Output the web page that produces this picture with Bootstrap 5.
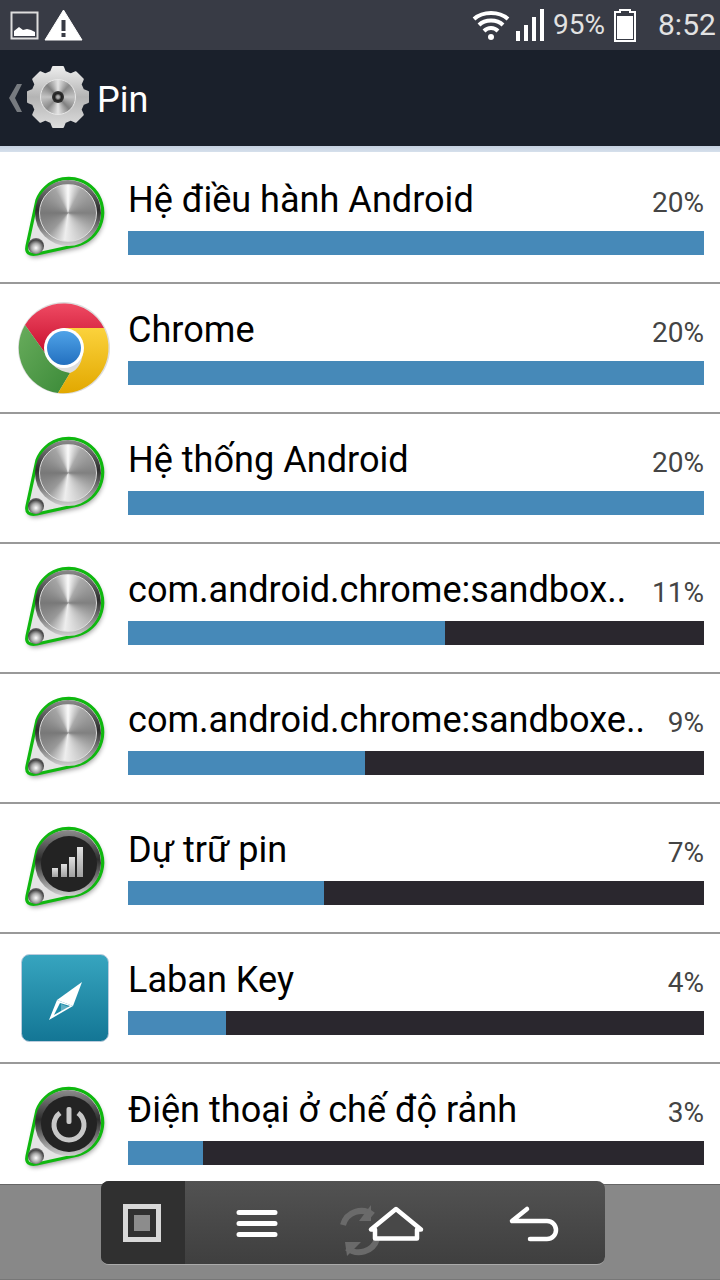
<!DOCTYPE html>
<html lang="vi">
<head>
<meta charset="utf-8">
<title>Pin</title>
<link rel="stylesheet" href="https://cdn.jsdelivr.net/npm/bootstrap@5.3.0/dist/css/bootstrap.min.css">
<style>
html,body{margin:0;height:1280px;overflow:hidden}
body{font-family:Roboto,"Noto Sans",sans-serif;background:#fff}
.phone{width:720px;height:1280px}
.sb{height:50px;background:#383b45;color:#e2e2e2;font-size:28px;line-height:50px}
.sb-time{width:62px;text-align:left;margin-left:21px;font-size:30px}
.abar{height:96px;background:#1a202b;color:#fff;font-size:36px}
.abar-gear{position:relative;width:64px;height:64px;margin:0 0 2px 2px}
.abar-title{padding-top:4px;margin-left:7px}
.gear-disc{position:absolute;left:14px;top:14px;width:36px;height:36px;border-radius:50%;border:1px solid #e8e8e8;background:conic-gradient(#e4e4e4,#8a8a8a 12%,#c4c4c4 25%,#808080 38%,#e4e4e4 50%,#8a8a8a 62%,#c4c4c4 75%,#808080 88%,#e4e4e4)}
.gear-eye{position:absolute;left:26px;top:26px;width:12px;height:12px;border-radius:50%;background:radial-gradient(#aaa 0 15%,#222 40%,#333 70%,#888 100%)}
.hline{height:6px;background:linear-gradient(#c4d0e0,#d6e0ec)}
.plist{padding-top:2px;overflow:hidden;min-height:0}
.prow{height:130px;border-bottom:2px solid #999;flex:none}
.picon{position:relative;width:128px;height:128px;flex:none}
.picon svg{display:block}
.pinsoft svg{filter:blur(.4px)}
.metal{position:absolute;left:39px;top:30px;width:58px;height:58px;border-radius:50%;border:1px solid #dcdcdc;filter:blur(.3px);background:conic-gradient(#fafafa 0,#aaa 8%,#808080 25%,#bcbcbc 38%,#eee 52%,#999 62%,#787878 75%,#a4a4a4 92%,#fafafa)}
.pmain{width:576px}
.ptitle{height:77px;padding-top:22px}
.pname{font-size:36.1px;line-height:48px;color:#000;white-space:nowrap}
.ppct{font-size:28px;line-height:48px;color:#444;padding-top:3px}
.pbar{height:24px;background:#2a272e}
.pbar .progress-bar{background:#4689b8}
.bnav{height:96px;flex:none;background:#888;border-top:1px solid #666;border-bottom:1px solid #777;position:relative;z-index:2}
.bpanel{width:504px;height:84px;margin:-4px 0 0 101px;background:linear-gradient(#525252,#3f3f3f);border-radius:8px;border-bottom:1px solid #aaa;overflow:hidden}
.bitem{height:84px;flex:none}
.bitem svg{display:block}
.bsel{background:#303030}
</style>
</head>
<body>
<svg width="0" height="0" class="d-block position-absolute">
<defs>
<radialGradient id="ballg" cx=".5" cy=".62" r=".62"><stop offset="0" stop-color="#fff"/><stop offset=".45" stop-color="#aaa"/><stop offset=".8" stop-color="#444"/><stop offset="1" stop-color="#777"/></radialGradient>
<linearGradient id="gearg" x1="0" y1="0" x2="0" y2="1"><stop offset="0" stop-color="#ececec"/><stop offset=".5" stop-color="#b4b4b4"/><stop offset="1" stop-color="#dcdcdc"/></linearGradient>
<linearGradient id="ring" x1="0" y1="0" x2="0" y2="1"><stop offset="0" stop-color="#8c8c8c"/><stop offset=".45" stop-color="#2c2c2c"/><stop offset=".58" stop-color="#505050"/><stop offset="1" stop-color="#d0d0d0"/></linearGradient>
<linearGradient id="redg" x1="0" y1="0" x2="0" y2="1"><stop offset="0" stop-color="#ef4a63"/><stop offset="1" stop-color="#c8102e"/></linearGradient>
<linearGradient id="yelg" x1="0" y1="0" x2="0" y2="1"><stop offset="0" stop-color="#fbd23c"/><stop offset="1" stop-color="#e2a800"/></linearGradient>
<linearGradient id="greg" x1="0" y1="0" x2="1" y2="1"><stop offset="0" stop-color="#68ac5c"/><stop offset="1" stop-color="#3b8a38"/></linearGradient>
<linearGradient id="blug" x1="0" y1="0" x2="0" y2="1"><stop offset="0" stop-color="#4fa3e8"/><stop offset="1" stop-color="#2370bf"/></linearGradient>
<linearGradient id="tealg" x1="0" y1="0" x2="0" y2="1"><stop offset="0" stop-color="#37a5bf"/><stop offset="1" stop-color="#137695"/></linearGradient>
<linearGradient id="barsg" x1="0" y1="0" x2="0" y2="1"><stop offset="0" stop-color="#e0e0e0"/><stop offset="1" stop-color="#a0a0a0"/></linearGradient>
<filter id="soft" x="-20%" y="-20%" width="140%" height="150%"><feGaussianBlur stdDeviation="2.500"/></filter>
<symbol id="pinshape" viewBox="0 0 128 128">
<path d="M37 46A34 34 0 1 1 78 91L37 100Q25 102 27 92Z" transform="translate(1 3)" fill="#000" opacity=".4" filter="url(#soft)"/>
<path d="M37 46A34 34 0 1 1 78 91L37 100Q25 102 27 92Z" fill="#e4e4e4" stroke="#0fb80f" stroke-width="3.200"/>
<circle cx="68" cy="59" r="33" fill="url(#ring)"/>
<circle cx="36" cy="92" r="8" fill="url(#ballg)"/>
</symbol>
</defs>
</svg>

<div class="phone d-flex flex-column">
  <div class="sb d-flex align-items-center flex-shrink-0">
    <svg class="ms-2" width="32" height="32" viewBox="0 0 32 32"><rect x="3.500" y="3.500" width="26" height="26" fill="none" stroke="#ddd" stroke-width="2"/><path d="M6 27V22L11 18L15 21L19 20L23 21L27 23V27Z" fill="#fff"/></svg>
    <svg class="ms-1" width="40" height="40" viewBox="0 0 40 40"><path d="M19.500 1L38 31H1Z" transform="translate(0 4)" fill="#fff" stroke="#fff" stroke-linejoin="round"/><rect x="17.500" y="15" width="4" height="11" fill="#383b45"/><rect x="17.500" y="28" width="4" height="4" fill="#383b45"/></svg>
    <div class="ms-auto d-flex align-items-center">
      <svg width="40" height="34" viewBox="0 0 40 34" fill="none" stroke="#fff" stroke-width="4"><path d="M3 11C12 3 28 3 37 11"/><path d="M8 17C14 11 26 11 32 17"/><path d="M13 23C17 19 23 19 27 23"/><circle cx="20" cy="29" r="3" fill="#fff" stroke="none"/></svg>
      <svg class="ms-1" width="30" height="34" viewBox="0 0 30 34" fill="#fff"><rect x="1" y="23" width="4" height="10"/><rect x="9" y="17" width="4" height="16"/><rect x="17" y="9" width="4" height="24"/><rect x="25" y="1" width="4" height="32"/></svg>
      <span class="ms-2">95%</span>
      <svg class="ms-2" width="24" height="36" viewBox="0 0 24 36"><path d="M2 5H7V3H17V5H22V34H2Z" fill="none" stroke="#fff" stroke-width="2"/><rect x="4" y="9" width="16" height="23" fill="#fff"/></svg>
      <span class="sb-time">8:52</span>
    </div>
  </div>

  <div class="abar d-flex align-items-center flex-shrink-0">
    <svg class="ms-2" width="16" height="30" viewBox="0 0 16 30"><path d="M14 1H9L1 15L9 29H14L7 15Z" fill="#777b80"/></svg>
    <span class="abar-gear d-inline-block">
      <svg width="64" height="64" viewBox="-32 -32 64 64"><polygon fill="url(#gearg)" stroke="url(#gearg)" stroke-width="2" stroke-linejoin="round" points="-7,-25 -5,-30 5,-30 7,-25 12.700,-22.600 17.700,-24.800 24.800,-17.700 22.600,-12.700 25,-7 30,-5 30,5 25,7 22.600,12.700 24.800,17.700 17.700,24.800 12.700,22.600 7,25 5,30 -5,30 -7,25 -12.700,22.600 -17.700,24.800 -24.800,17.700 -22.600,12.700 -25,7 -30,5 -30,-5 -25,-7 -22.600,-12.700 -24.800,-17.700 -17.700,-24.800 -12.700,-22.600"/></svg>
      <span class="gear-disc"></span><span class="gear-eye"></span>
    </span>
    <span class="abar-title">Pin</span>
  </div>
  <div class="hline flex-shrink-0"></div>

  <div class="plist flex-grow-1">
    <div class="prow d-flex">
      <div class="picon pinsoft"><svg width="128" height="128"><use href="#pinshape"/></svg><span class="metal"></span></div>
      <div class="pmain">
        <div class="ptitle d-flex justify-content-between"><span class="pname">Hệ điều hành Android</span><span class="ppct">20%</span></div>
        <div class="progress pbar rounded-0"><div class="progress-bar" style="width:100%"></div></div>
      </div>
    </div>
    <div class="prow d-flex">
      <div class="picon"><svg width="128" height="128" viewBox="0 0 128 128">
        <circle cx="64" cy="64" r="46" fill="#ddd"/>
        <path d="M25 41A45.500 45.500 0 0 1 104 44H64Q50 46 45 69Z" fill="url(#redg)"/>
        <path d="M25 41L45 69Q52 86 70 89L58 109A45.500 45.500 0 0 1 25 41Z" fill="url(#greg)"/>
        <path d="M104 44A45.500 45.500 0 0 1 58 109L70 89Q83 84 83 64Q83 52 64 44Z" fill="url(#yelg)"/>
        <circle cx="64" cy="64" r="20" fill="#fff"/><circle cx="64" cy="64" r="17" fill="url(#blug)"/>
      </svg></div>
      <div class="pmain">
        <div class="ptitle d-flex justify-content-between"><span class="pname">Chrome</span><span class="ppct">20%</span></div>
        <div class="progress pbar rounded-0"><div class="progress-bar" style="width:100%"></div></div>
      </div>
    </div>
    <div class="prow d-flex">
      <div class="picon pinsoft"><svg width="128" height="128"><use href="#pinshape"/></svg><span class="metal"></span></div>
      <div class="pmain">
        <div class="ptitle d-flex justify-content-between"><span class="pname">Hệ thống Android</span><span class="ppct">20%</span></div>
        <div class="progress pbar rounded-0"><div class="progress-bar" style="width:100%"></div></div>
      </div>
    </div>
    <div class="prow d-flex">
      <div class="picon pinsoft"><svg width="128" height="128"><use href="#pinshape"/></svg><span class="metal"></span></div>
      <div class="pmain">
        <div class="ptitle d-flex justify-content-between"><span class="pname">com.android.chrome:sandbox..</span><span class="ppct">11%</span></div>
        <div class="progress pbar rounded-0"><div class="progress-bar" style="width:55%"></div></div>
      </div>
    </div>
    <div class="prow d-flex">
      <div class="picon pinsoft"><svg width="128" height="128"><use href="#pinshape"/></svg><span class="metal"></span></div>
      <div class="pmain">
        <div class="ptitle d-flex justify-content-between"><span class="pname">com.android.chrome:sandboxe..</span><span class="ppct">9%</span></div>
        <div class="progress pbar rounded-0"><div class="progress-bar" style="width:41.200%"></div></div>
      </div>
    </div>
    <div class="prow d-flex">
      <div class="picon pinsoft"><svg width="128" height="128" viewBox="0 0 128 128"><use href="#pinshape" width="128" height="128"/>
        <circle cx="69" cy="60" r="28" fill="#232323"/>
        <g fill="url(#barsg)"><rect x="52" y="64" width="6" height="9"/><rect x="61" y="60" width="6" height="13"/><rect x="69" y="53" width="6" height="20"/><rect x="77" y="43" width="6" height="30"/></g>
      </svg></div>
      <div class="pmain">
        <div class="ptitle d-flex justify-content-between"><span class="pname">Dự trữ pin</span><span class="ppct">7%</span></div>
        <div class="progress pbar rounded-0"><div class="progress-bar" style="width:34%"></div></div>
      </div>
    </div>
    <div class="prow d-flex">
      <div class="picon"><svg width="128" height="128" viewBox="0 0 128 128">
        <rect x="21.500" y="20.500" width="87" height="87" rx="8" fill="url(#tealg)" stroke="#bcd"/>
        <path d="M82 48L57 66L73 72Z" fill="#fff"/>
        <path d="M57 66L49 86L73 72Z" fill="#fff"/><path d="M60 69L54 81L70 72Z" fill="#1c8ba8"/><path d="M61 70L61 78L69 73Z" fill="#fff" opacity=".3"/>
      </svg></div>
      <div class="pmain">
        <div class="ptitle d-flex justify-content-between"><span class="pname">Laban Key</span><span class="ppct">4%</span></div>
        <div class="progress pbar rounded-0"><div class="progress-bar" style="width:17%"></div></div>
      </div>
    </div>
    <div class="prow d-flex">
      <div class="picon pinsoft"><svg width="128" height="128" viewBox="0 0 128 128"><use href="#pinshape" width="128" height="128"/>
        <circle cx="69" cy="60" r="28" fill="#232323"/>
        <path d="M60 49A15 15 0 1 0 78 49" fill="none" stroke="#c8c8c8" stroke-width="5"/><rect x="66.500" y="43" width="5" height="17" rx="2" fill="#c8c8c8"/>
      </svg></div>
      <div class="pmain">
        <div class="ptitle d-flex justify-content-between"><span class="pname">Điện thoại ở chế độ rảnh</span><span class="ppct">3%</span></div>
        <div class="progress pbar rounded-0"><div class="progress-bar" style="width:13%"></div></div>
      </div>
    </div>
  </div>

  <div class="bnav">
    <div class="bpanel d-flex">
      <div class="bitem bsel"><svg width="84" height="84" viewBox="0 0 84 84"><rect x="24.500" y="25.500" width="33" height="33" fill="none" stroke="#d8d8d8" stroke-width="5"/><rect x="33" y="34" width="16" height="16" fill="#8c8c8c"/></svg></div>
      <div class="bitem"><svg width="144" height="84" viewBox="0 0 144 84" fill="none" stroke="#fff" stroke-width="5" stroke-linecap="round"><path d="M54 31.500H90M54 42.500H90M54 53.500H90"/></svg></div>
      <div class="bitem"><svg width="134" height="84" viewBox="0 0 134 84" fill="none">
        <path d="M14 44A19 19 0 0 1 44 34M48 58A19 19 0 0 1 18 67" stroke="#6a6a6a" stroke-width="6"/><path d="M42 24V40H30Z M16 61H32L18 75Z" fill="#6a6a6a"/>
        <path d="M42 48.500H46V57.500H88V48.500H92L67 28Z" stroke="#fff" stroke-width="4.500" stroke-linejoin="round" fill="#484848"/></svg></div>
      <div class="bitem"><svg width="142" height="84" viewBox="0 0 142 84" fill="none" stroke="#fff" stroke-width="4.500" stroke-linecap="round" stroke-linejoin="round"><path d="M64 28L49 40H84A9 9 0 0 1 84 58H67"/></svg></div>
    </div>
  </div>
</div>
<script src="https://cdn.jsdelivr.net/npm/bootstrap@5.3.0/dist/js/bootstrap.bundle.min.js"></script>
</body>
</html>
